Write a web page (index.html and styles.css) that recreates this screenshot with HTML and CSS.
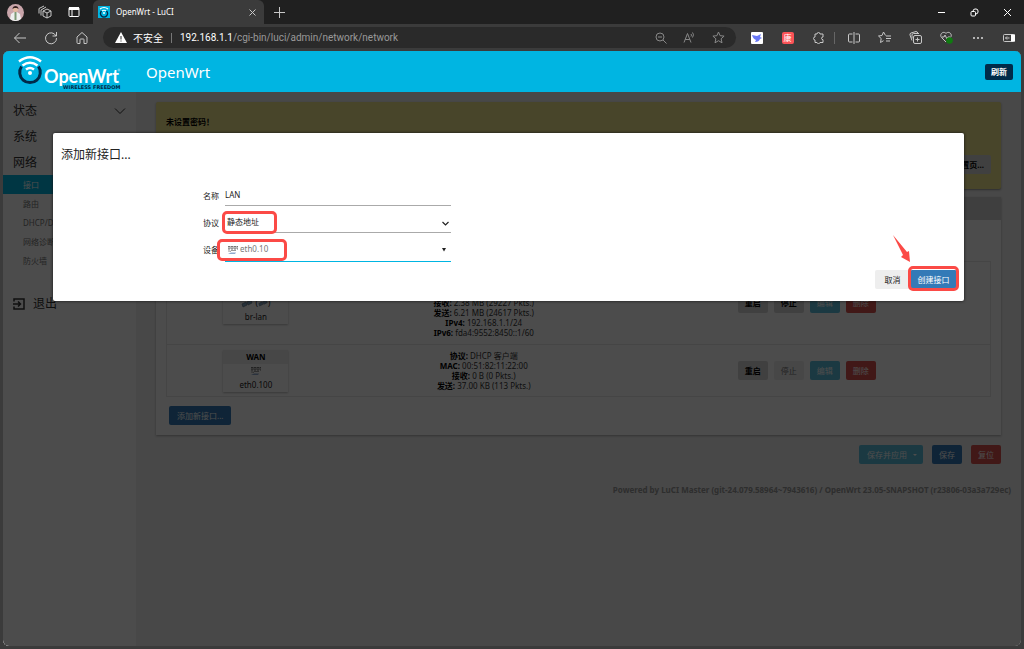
FILE: index.html
```html
<!DOCTYPE html>
<html lang="zh-CN">
<head>
<meta charset="utf-8">
<title>OpenWrt - LuCI</title>
<link rel="stylesheet" href="styles.css">
</head>
<body>
<svg class="defs" aria-hidden="true">
  <symbol id="port" viewBox="0 0 12 10">
    <path d="M1 1h10v3H1z" fill="#bbb"/>
    <path d="M1 1.500h10M1 4h10" stroke="#777" stroke-dasharray="2 1"/>
    <path d="M9 5.500H4L3 7M1 6h2" fill="none" stroke="#999"/>
    <path d="M1 9l3-1.500h5L8 9z" fill="#8fa9cc"/>
  </symbol>
  <symbol id="link" viewBox="0 0 12 10">
    <path d="M1 5l4-2 1 3-4 2zM6 3l4-2 1 3-4 2z" fill="#7fa3c4" stroke="#678" stroke-width=".7"/>
  </symbol>
  <symbol id="chev" viewBox="0 0 12 8"><path d="M1 1.500l5 5 5-5" fill="none" stroke="currentColor"/></symbol>
</svg>

<header class="tabstrip">
  <button class="slot strip" aria-label="用户">
    <svg width="17" height="17" viewBox="0 0 17 17"><circle cx="8.500" cy="8.500" r="8.500" fill="#c9a5aa"/><path d="M3 15l1-5 3-2h3l3 2 1 5a8.500 8.500 0 0 1-11 0z" fill="#eee"/><path d="M7.500 8h2v8h-2z" fill="#7d9a76"/><circle cx="8.500" cy="5.500" r="2.500" fill="#e3b9a0"/><path d="M5.500 5c0-4 6-4 6 0-1-1.500-5-1.500-6 0z" fill="#36201f"/></svg>
  </button>
  <button class="slot strip" aria-label="工作区">
    <svg width="14" height="14" viewBox="0 0 14 14" class="line"><path d="M5 6l4-2 4 2v5l-4 2-4-2zM5 6l4 2 4-2M9 8v5M3 10.500V5l5-3M1 8.500V3.500L6 1"/></svg>
  </button>
  <button class="slot strip" aria-label="标签操作">
    <svg width="12" height="12" viewBox="0 0 12 12"><rect x="1" y="1.500" width="10" height="9" rx="1" fill="none" stroke="#fff"/><path d="M1 1h10v3H1z" fill="#fff"/><path d="M4 4v6" stroke="#fff"/></svg>
  </button>
  <div class="tab">
    <svg width="12" height="12" viewBox="0 0 12 12"><path d="M0 0h12v12H0z" fill="#00b5e2"/><path d="M3.500 5a3.500 3.500 0 1 0 5 0" fill="none" stroke="#002b49" stroke-width="1.500"/><path d="M2 3q4-3 8 0M4 5q2-1.500 4 0" fill="none" stroke="#fff" stroke-width="1.200"/><circle cx="6" cy="7" r="1" fill="#fff"/></svg>
    <span class="tab-title">OpenWrt - LuCI</span>
    <button class="bare" aria-label="关闭标签"><svg width="7" height="7" viewBox="0 0 7 7" class="line"><path d="M.5.5l6 6M6.500.5l-6 6"/></svg></button>
  </div>
  <button class="slot" aria-label="新标签"><svg width="11" height="11" viewBox="0 0 11 11" class="line"><path d="M5.500 0v11M0 5.500h11"/></svg></button>
  <div class="spacer"></div>
  <button class="slot window" aria-label="最小化"><svg width="9" height="9" viewBox="0 0 9 9" class="line bright"><path d="M1 4.500h7"/></svg></button>
  <button class="slot window" aria-label="还原"><svg width="9" height="9" viewBox="0 0 9 9" class="line bright"><rect x="1" y="3.500" width="4.500" height="4.500" rx="1"/><path d="M3 3.500q0-2.500 2-2.500h1q2 0 2 2v1q0 2-2.500 2"/></svg></button>
  <button class="slot window" aria-label="关闭"><svg width="9" height="9" viewBox="0 0 9 9" class="line bright"><path d="M1 1l7 7M8 1L1 8"/></svg></button>
</header>

<nav class="toolbar">
  <button class="slot" aria-label="后退"><svg width="14" height="14" viewBox="0 0 14 14" class="line"><path d="M13 7H1.500M6.500 2l-5 5 5 5"/></svg></button>
  <button class="slot" aria-label="刷新页面"><svg width="14" height="14" viewBox="0 0 14 14" class="line"><path d="M12 5a5.500 5.500 0 1 0 .5 2M12.500 1v4h-4"/></svg></button>
  <button class="slot" aria-label="主页"><svg width="14" height="14" viewBox="0 0 14 14" class="line"><path d="M2 6l5-4.500L12 6v5.500q0 1-1 1H9V8.500q0-.5-.5-.5h-3q-.5 0-.5.500v4H3q-1 0-1-1z"/></svg></button>
  <div class="address">
    <svg width="12" height="11" viewBox="0 0 12 11"><path d="M6 0l6 11H0z" fill="#fff"/><path d="M6 4v3.500M6 8.500v1" stroke="#2a2a2a"/></svg>
    <span class="unsafe">不安全</span>
    <a class="url" href="#"><b>192.168.1.1</b>/cgi-bin/luci/admin/network/network</a>
    <button class="slot dim" aria-label="缩小"><svg width="12" height="12" viewBox="0 0 12 12" class="line"><circle cx="5" cy="5" r="4"/><path d="M8 8l3.500 3.500M3 5h4"/></svg></button>
    <button class="slot dim" aria-label="朗读"><svg width="13" height="13" viewBox="0 0 13 13" class="line"><path d="M1 11.500l3.500-9 3.500 9M2.200 8.500h4.600M8 3q1 1 0 2.500M9.500 1.500q2 2 0 5"/></svg></button>
    <button class="slot dim" aria-label="收藏"><svg width="13" height="13" viewBox="0 0 13 13" class="line"><path d="M6.500 1l1.600 3.700 4 .4-3 2.700.9 4-3.500-2.100L3 11.800l.9-4-3-2.700 4-.4z"/></svg></button>
  </div>
  <button class="slot" aria-label="飞鸟扩展"><svg width="12" height="12" viewBox="0 0 12 12"><rect width="12" height="12" rx="1" fill="#fff"/><path d="M1 3l5 1 4-2-1 3 2 1-2 1q-1 3-5 3l1-2q-3-1-4-5z" fill="#6877f5"/></svg></button>
  <button class="slot" aria-label="红色扩展"><span class="red-ext">康</span></button>
  <button class="slot" aria-label="扩展"><svg width="12" height="12" viewBox="0 0 12 12" class="line"><path d="M4 2q0-1.500 1.500-1.500T7 2h3v3q-1.500 0-1.500 1.300T10 7.700V10.500H7q0 1-1.500 1T4 10.500H2V8Q.5 8 .5 6.500T2 5V2z"/></svg></button>
  <span class="divider"></span>
  <button class="slot" aria-label="分屏"><svg width="12" height="12" viewBox="0 0 12 12" class="line"><path d="M4.500 2H1.500q-1 0-1 1v6q0 1 1 1h3M7.500 2h3q1 0 1 1v6q0 1-1 1h-3M6 0v12"/></svg></button>
  <button class="slot" aria-label="收藏夹"><svg width="13" height="13" viewBox="0 0 13 13" class="line"><path d="M7.500 4.500L5.500 1 4 4.500l-3.500.5 2.700 2.500L2.500 11.500l3-1.800M8 5h5M8 7.500h5M8 10h4"/></svg></button>
  <button class="slot" aria-label="集锦"><svg width="13" height="13" viewBox="0 0 13 13" class="line"><rect x="4.500" y="4.500" width="8" height="8" rx="1.500"/><path d="M8.500 6.500v4M6.500 8.500h4M3 9.500L1 4Q.5 2.500 2 2l5-1.500q1.500 0 2 2M3 7.500V4q0-1.500 1.500-1.500H10"/></svg></button>
  <button class="slot" aria-label="浏览器概要"><svg width="13" height="13" viewBox="0 0 13 13"><path class="line" d="M6 11L1.500 6.500C-1 3 3.500-.5 6 2.500c2.500-3 7 .5 4.500 4M2 6h2l1-2 2 4 1-2h2" /><circle cx="9.500" cy="9.500" r="3.300" fill="#0f7b10"/></svg></button>
  <button class="slot" aria-label="更多"><svg width="12" height="12" viewBox="0 0 12 12" fill="#ddd"><circle cx="2" cy="6" r="1"/><circle cx="6" cy="6" r="1"/><circle cx="10" cy="6" r="1"/></svg></button>
  <button class="slot" aria-label="侧栏"><svg width="12" height="10" viewBox="0 0 12 10" class="line"><rect x=".5" y="1.500" width="11" height="7" rx="1"/><path d="M6.500 5H2.500M4 3.500L2.500 5 4 6.500"/><path d="M8 1.500h4v7H8z" fill="#fff" stroke="none"/></svg></button>
</nav>

<div class="viewport">
  <header class="brandbar">
    <svg class="logo" width="108" height="38" viewBox="0 0 108 38" role="img" aria-label="OpenWrt">
      <path d="M4.500 13.500a10.300 10.300 0 1 0 17 0" fill="none" stroke="#002b49" stroke-width="3"/>
      <path d="M2 8.500q11-8.500 22 0M5.500 12.500q7.500-5.500 15 0M9 16.500q4-3 8 0" fill="none" stroke="#fff" stroke-width="2.500"/>
      <circle cx="13" cy="20" r="2" fill="#fff"/>
      <text x="27" y="30" class="logo-name">OpenWrt</text>
      <circle cx="102" cy="17" r="1" fill="none" stroke="#7fd9ef"/>
      <text x="46" y="36" class="logo-tag">WIRELESS FREEDOM</text>
    </svg>
    <a class="host" href="#">OpenWrt</a>
    <button class="refresh">刷新</button>
  </header>

  <div class="page">
    <nav class="sidebar">
      <a class="menu" href="#">状态 <svg width="12" height="8"><use href="#chev"/></svg></a>
      <a class="menu" href="#">系统</a>
      <a class="menu" href="#">网络</a>
      <a class="sub active" href="#">接口</a>
      <a class="sub" href="#">路由</a>
      <a class="sub" href="#">DHCP/DNS</a>
      <a class="sub" href="#">网络诊断</a>
      <a class="sub" href="#">防火墙</a>
      <a class="menu logout" href="#"><svg width="12" height="12" viewBox="0 0 12 12" fill="none" stroke="currentColor" stroke-width="1.500"><path d="M1 3.500V1h10v10H1V8.500M0 6h7.500M5 3.500L7.500 6 5 8.500"/></svg>退出</a>
    </nav>
    <main class="main">
      <section class="alert">
        <h2>未设置密码！</h2>
        <button class="btn neutral">跳转到密码配置页...</button>
      </section>
      <section class="card">
        <div class="card-head"></div>
        <div class="card-body">
          <table class="ifaces">
            <tbody>
              <tr>
                <td class="col-name"><div class="iface"><strong>LAN</strong><span><svg width="12" height="10"><use href="#link"/></svg> (<svg width="10" height="9"><use href="#link"/></svg>)</span><span>br-lan</span></div></td>
                <td class="col-info"><b>协议:</b> 静态地址<br><b>运行时间:</b> 0h 9m 12s<br><b>MAC:</b> 00:51:82:11:22:00<br><b>接收:</b> 2.38 MB (29227 Pkts.)<br><b>发送:</b> 6.21 MB (24617 Pkts.)<br><b>IPv4:</b> 192.168.1.1/24<br><b>IPv6:</b> fda4:9552:8450::1/60</td>
                <td class="col-actions"><div class="actions"><button class="btn neutral">重启</button><button class="btn neutral">停止</button><button class="btn info">编辑</button><button class="btn danger">删除</button></div></td>
              </tr>
              <tr>
                <td class="col-name"><div class="iface"><strong>WAN</strong><span><svg width="12" height="10"><use href="#port"/></svg></span><span>eth0.100</span></div></td>
                <td class="col-info"><b>协议:</b> DHCP 客户端<br><b>MAC:</b> 00:51:82:11:22:00<br><b>接收:</b> 0 B (0 Pkts.)<br><b>发送:</b> 37.00 KB (113 Pkts.)</td>
                <td class="col-actions"><div class="actions"><button class="btn neutral">重启</button><button class="btn neutral" disabled>停止</button><button class="btn info">编辑</button><button class="btn danger">删除</button></div></td>
              </tr>
            </tbody>
          </table>
          <button class="btn primary add">添加新接口...</button>
        </div>
      </section>
      <div class="page-actions">
        <button class="btn info">保存并应用 <span class="caret"></span></button>
        <button class="btn primary">保存</button>
        <button class="btn danger">复位</button>
      </div>
      <footer class="foot">Powered by LuCI Master (git-24.079.58964~7943616) / OpenWrt 23.05-SNAPSHOT (r23806-03a3a729ec)</footer>
    </main>
  </div>

  <div class="overlay">
    <form class="modal" role="dialog" aria-labelledby="dlg">
      <h1 id="dlg">添加新接口...</h1>
      <div class="fields">
        <label for="name">名称</label>
        <div class="field"><input id="name" type="text" value="LAN"></div>
        <label for="proto">协议</label>
        <div class="field"><select id="proto"><option>静态地址</option></select><svg class="arrow" width="7" height="5" viewBox="0 0 7 5"><path d="M.5 1l3 3 3-3" fill="none" stroke="#222" stroke-width="1.200"/></svg><span class="mark mark-proto"></span></div>
        <label for="dev">设备</label>
        <div class="field focus"><svg class="dev-icon" width="12" height="10"><use href="#port"/></svg><select id="dev"><option>eth0.10</option></select><svg class="arrow" width="7" height="4" viewBox="0 0 7 4"><path d="M0 0h4l-2 3.500z" fill="#222"/></svg><span class="mark mark-dev"></span></div>
      </div>
      <div class="buttons">
        <button type="button" class="btn cancel">取消</button>
        <div class="create">
          <button type="button" class="btn primary">创建接口</button>
          <span class="mark mark-create"></span>
          <svg class="pointer" width="18" height="28" viewBox="0 0 18 28"><path d="M0 0l14 17 2-1 1 11-9-5 2-2z" fill="#fb4a46"/></svg>
        </div>
      </div>
    </form>
  </div>
</div>
</body>
</html>
```
FILE: styles.css
```css
* { box-sizing: border-box; }
body {
  margin: 0;
  height: 100vh;
  display: flex;
  flex-direction: column;
  background: #3b3b3b;
  color: #222;
  font: 8px/10px "Noto Sans", "Noto Sans CJK SC", sans-serif;
  overflow: hidden;
}
button, input, select { font: inherit; color: inherit; margin: 0; }
a { color: inherit; text-decoration: none; }
.defs { display: none; }
.line { fill: none; stroke: #c8c8c8; }
.bright { stroke: #fff; }

.tabstrip, .toolbar { display: flex; align-items: center; flex: none; }
.tabstrip { height: 24px; background: #202020; }
.toolbar { height: 27px; padding-left: 4px; }
.slot {
  width: 31px;
  height: 24px;
  padding: 0;
  border: 0;
  background: none;
  display: flex;
  align-items: center;
  justify-content: center;
  flex: none;
}
.strip { width: 29px; }
.strip:first-child { margin-left: 1px; }
.window { width: 33px; }
.bare { border: 0; padding: 0; background: none; display: flex; }
.tab {
  align-self: stretch;
  width: 171px;
  margin-left: 5px;
  padding: 0 8px 0 5px;
  display: flex;
  align-items: center;
  gap: 6px;
  background: #3b3b3b;
  border-radius: 6px 6px 0 0;
  color: #fff;
}
.tab-title { flex: 1; }
.spacer { flex: 1; }

.address {
  flex: 1;
  height: 21px;
  margin: 0 5px 0 6px;
  padding: 0 3px 0 12px;
  display: flex;
  align-items: center;
  border-radius: 11px;
  background: #2a2a2a;
  color: #999;
  font-size: 10px;
}
.address .slot { width: 29px; height: 21px; }
.address .dim svg { stroke: #888; }
.unsafe { margin-left: 6px; padding-right: 8px; border-right: 1px solid #777; color: #fff; }
.url { flex: 1; margin-left: 8px; font-family: Roboto, sans-serif; }
.url b { font-weight: 400; color: #fff; }
.divider { width: 4px; height: 12px; border-left: 1px solid #666; }
.red-ext { width: 12px; height: 12px; line-height: 12px; border-radius: 2px; background: #fb5357; color: #fff; }

.viewport {
  flex: 1;
  min-height: 0;
  margin: 0 3px 3px;
  display: flex;
  flex-direction: column;
  position: relative;
  border-radius: 6px;
  overflow: hidden;
  background: #f0f0f0;
}
.brandbar {
  position: relative;
  z-index: 2;
  flex: none;
  height: 41px;
  padding: 0 8px 0 14px;
  display: flex;
  align-items: center;
  background: #00b5e2;
  color: #fff;
}
.logo-name { font: 700 18px Lato, sans-serif; fill: #fff; }
.logo-tag { font: 700 5px "DejaVu Sans", sans-serif; fill: #002b49; }
.host { flex: 1; margin-left: 21px; font-size: 15px; line-height: 20px; }
.refresh {
  padding: 3px 6px;
  border: 0;
  border-radius: 2px;
  background: #002b49;
  color: #fff;
  font-weight: 700;
}

.page { flex: 1; display: flex; min-height: 0; }
.sidebar { width: 133px; flex: none; padding-top: 5px; background: #fff; color: #333; }
.menu {
  display: flex;
  align-items: center;
  justify-content: space-between;
  height: 26px;
  padding: 2px 10px 0;
  font-size: 12px;
}
.sub { display: block; padding: 0 20px; line-height: 19px; color: #777; }
.active { background: #00b5e2; color: #fff; }
.logout { margin-top: 20px; justify-content: flex-start; gap: 8px; }

.main { flex: 1; min-width: 0; padding: 10px 20px 0; }
.alert {
  height: 87px;
  padding: 15px 10px;
  display: flex;
  flex-direction: column;
  justify-content: space-between;
  border-radius: 2px;
  background: #f0e68c;
  box-shadow: 0 1px 2px #999;
}
.alert h2 { margin: 0; font-size: 8px; line-height: 10px; color: #000; }
.alert .btn { align-self: flex-end; }
.card { margin-top: 8px; background: #fff; box-shadow: 0 1px 2px #aaa; }
.card-head { height: 23px; background: #d4d4d4; }
.card-body { padding: 41px 10px 10px; }
.ifaces { width: 100%; border-collapse: collapse; table-layout: fixed; margin-bottom: 9px; border: 1px solid #e8e8e8; }
.ifaces td { padding: 4px 0; border-top: 1px solid #e8e8e8; text-align: center; height: 52px; }
.ifaces tr:first-child td { height: 83px; }
.ifaces .col-name { width: 22%; padding-right: 3px; }
.ifaces .col-info { width: 33%; color: #333; }
.ifaces .col-actions { padding-left: 4px; }
.ifaces b { color: #000; }
.iface { width: 65px; margin: 0 auto; display: flex; flex-direction: column; box-shadow: 0 1px 2px #bbb; line-height: 14px; }
.iface strong { background: #eee; color: #000; }
.iface svg { vertical-align: middle; }
.actions { display: flex; justify-content: center; gap: 6px; }

.btn { height: 19px; padding: 0 7px; border: 0; border-radius: 2px; line-height: 10px; color: #fff; }
.neutral { background: #d8d8d8; color: #000; font-weight: 700; }
.neutral:disabled { background: #eee; color: #777; font-weight: 400; }
.info { background: #5bc0de; }
.primary { background: #337ab7; }
.danger { background: #d9534f; }
.add { margin-left: 3px; padding: 0 8px; }
.page-actions { display: flex; justify-content: flex-end; gap: 9px; margin-top: 10px; }
.page-actions .info { padding: 0 6px 0 8px; }
.caret { display: inline-block; margin-left: 4px; border: 2px solid transparent; border-top-color: #fff; border-bottom: 0; vertical-align: middle; }
.foot { margin: 21px -10px 0 0; text-align: right; color: #999; font-weight: 700; }

.overlay {
  position: absolute;
  inset: 0;
  z-index: 1;
  padding: 82px 57px 0 50px;
  background: rgba(0, 0, 0, .7);
}
.modal { padding: 13px 7px 12px 8px; border-radius: 2px; background: #fff; box-shadow: 0 0 3px #111; }
.modal h1 { margin: 0; font-size: 12px; line-height: 18px; font-weight: 400; }
.fields {
  display: grid;
  grid-template-columns: 158px 226px;
  column-gap: 6px;
  margin-top: 19px;
}
.fields label { text-align: right; line-height: 26px; }
.field { position: relative; height: 23px; margin-bottom: 4px; border-bottom: 1px solid #aaa; }
.field input, .field select {
  width: 100%;
  height: 23px;
  padding: 0 0 0 2px;
  border: 0;
  outline: 0;
  background: none;
  appearance: none;
}
.field input { padding: 0; }
.focus { height: 25px; margin-bottom: 1px; border-bottom-color: #00b5e2; }
.focus select { height: 24px; padding-left: 15px; color: #777; }
.arrow { position: absolute; right: 2px; top: 11px; }
.dev-icon { position: absolute; left: 2px; top: 8px; }
.mark { position: absolute; border: 3px solid #fb4a46; border-radius: 5px; pointer-events: none; }
.mark-proto { left: -3px; top: 1px; width: 55px; height: 23px; }
.mark-dev { left: -8px; top: 2px; width: 70px; height: 22px; }
.buttons { display: flex; justify-content: flex-end; margin-top: 7px; }
.cancel { width: 35px; background: #eee; color: #222; }
.create { position: relative; }
.create .btn { width: 47px; }
.mark-create { inset: -4px -2px -2px; }
.pointer { position: absolute; left: -17px; top: -35px; }
```
